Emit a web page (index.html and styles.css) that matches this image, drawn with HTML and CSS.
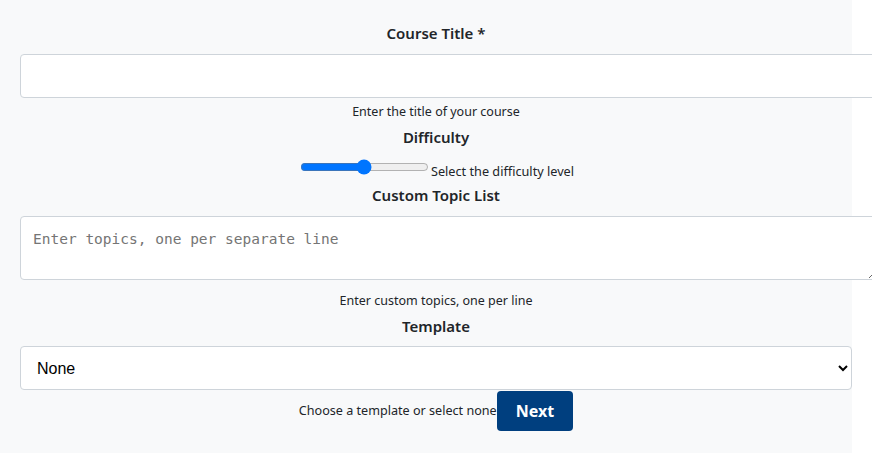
FILE: index.html
```html
<!DOCTYPE html>
<html lang="en">
<head>
<meta charset="utf-8">
<title>Course</title>
<link rel="stylesheet" href="styles.css">
</head>
<body>
<div class="page">
  <form class="form">
    <div class="group">
      <label class="label" for="title">Course Title *</label>
      <input class="field" id="title" type="text">
      <small class="help">Enter the title of your course</small>
    </div>
    <div class="group">
      <label class="label" for="difficulty">Difficulty</label>
      <div class="range-row"><input class="range" id="difficulty" type="range" min="0" max="100" value="50"><small class="help-range">Select the difficulty level</small></div>
    </div>
    <div class="group">
      <label class="label" for="topics">Custom Topic List</label>
      <textarea class="field area" id="topics" placeholder="Enter topics, one per separate line"></textarea>
      <small class="help help-area">Enter custom topics, one per line</small>
    </div>
    <div class="group">
      <label class="label label-tight" for="template">Template</label>
      <select class="select" id="template"><option>None</option></select>
      <div class="inline-row"><small class="help-inline">Choose a template or select none</small><button class="btn" type="button">Next</button></div>
    </div>
  </form>
</div>
</body>
</html>
```
FILE: styles.css
```css
html, body {
  margin: 0;
  padding: 0;
  background: #ffffff;
  overflow: hidden;
}
.page {
  width: 852px;
  min-height: 453px;
  box-sizing: border-box;
  padding: 22px 0 0 20px;
  background: #f8f9fa;
  font-family: "Noto Sans", "Open Sans", sans-serif;
  color: #212529;
}
.form {
  width: 832px;
}
.group {
  margin-bottom: 5px;
  text-align: center;
}
.label {
  display: block;
  font-size: 15px;
  font-weight: 600;
  line-height: 22px;
  margin-bottom: 10px;
}
.label-tight {
  margin-bottom: 9px;
}
.field {
  display: block;
  width: 100%;
  padding: 12px 16px;
  border: 1px solid #ced4da;
  border-radius: 4px;
  background: #fff;
  font-size: 16px;
  line-height: 18px;
  font-family: "Liberation Sans", Arial, sans-serif;
  margin: 0;
}
.area {
  height: 37px;
  padding: 13px 12px 12px;
  font-family: "DejaVu Sans Mono", monospace;
  font-size: 14.5px;
  line-height: 18px;
  resize: vertical;
}
.area::placeholder {
  color: #757575;
}
.help {
  display: block;
  margin-top: 5px;
  font-size: 12.5px;
  line-height: 18px;
  color: #212529;
}
.help-area {
  margin-top: 12px;
}
.range-row {
  display: flex;
  justify-content: center;
  align-items: flex-start;
  height: 21px;
}
.range {
  margin: 1px 2px 0;
}
.help-range {
  margin-top: 4px;
  font-size: 12.7px;
  line-height: 18px;
  color: #212529;
}
.inline-row {
  line-height: 20px;
  padding-top: 1px;
}
.help-inline {
  font-size: 12.6px;
  color: #212529;
}
.select {
  display: block;
  width: 100%;
  height: 44px;
  padding: 0 12px;
  border: 1px solid #ced4da;
  border-radius: 4px;
  background: #fff;
  color: #000;
  font-family: "Liberation Sans", Arial, sans-serif;
  font-size: 16px;
  text-align: left;
  margin: 0;
}
.btn {
  display: inline-block;
  height: 40px;
  padding: 0 19px;
  border: 0;
  border-radius: 4px;
  background: #003f7f;
  color: #fff;
  font-family: "Noto Sans", sans-serif;
  font-size: 16px;
  font-weight: 700;
  vertical-align: middle;
}
```
